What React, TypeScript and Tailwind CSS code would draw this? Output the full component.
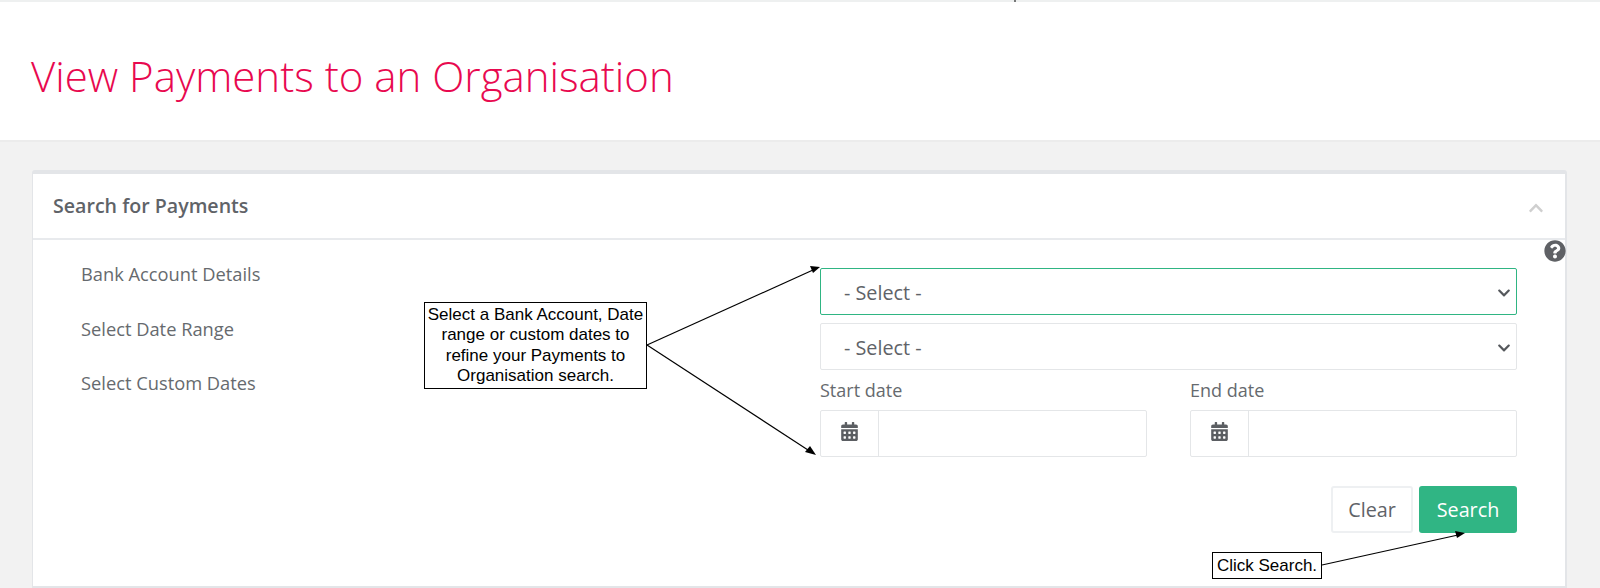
import { FaCalendarAlt, FaChevronDown, FaChevronUp, FaQuestionCircle } from 'react-icons/fa'

const openSans = "font-['Open_Sans',sans-serif]"

function SelectBox({ focused }: { focused?: boolean }) {
  return (
    <div
      className={`flex h-[47px] items-center justify-between rounded-[2px] pl-[23px] pr-[5px] pt-[2px] text-[19.8px] text-[#5f6368] border ${
        focused ? 'border-[#2fb583]' : 'border-[#e4e6e8]'
      }`}
    >
      <span>- Select -</span>
      <FaChevronDown className="h-[14px] w-[14px] text-[#55585c]" />
    </div>
  )
}

function DateField({ label }: { label: string }) {
  return (
    <div className="w-[327px]">
      <label className="block h-[40px] pt-[8px] text-[18px] leading-[24px] text-[#666a6e]">{label}</label>
      <div className="flex h-[47px] rounded-[2px] border border-[#e4e6e8]">
        <div className="flex w-[58px] items-center justify-center border-r border-[#e4e6e8]">
          <FaCalendarAlt className="-mt-[5px] h-[19px] w-[17px] text-[#5b5e62]" />
        </div>
        <div className="flex-1" />
      </div>
    </div>
  )
}

export default function App() {
  return (
    <div className={`relative h-[588px] w-[1600px] overflow-hidden bg-[#f2f2f2] ${openSans}`}>
      {/* Page title */}
      <div className="h-[142px] border-t-[2px] border-b-[2px] border-t-[#eef0f0] border-b-[#ececec] bg-white pl-[31px] pt-[44px]">
        <h1 className="text-[42px] font-light leading-[60px] text-[#e8094f]">View Payments to an Organisation</h1>
      </div>

      <div className="pl-[32px] pr-[33px] pt-[28px]">
        <div className="relative h-[418px] rounded-t-[3px] border-r-2 border-l border-b-2 border-t-[4px] border-[#e3e5e8] bg-white">
          <div className="flex h-[66px] items-center justify-between border-b-2 border-[#e8eaed] pl-[20px] pr-[20px]">
            <h2 className="text-[19.6px] font-semibold text-[#5f6368]">Search for Payments</h2>
            <FaChevronUp className="mt-[3px] h-[16px] w-[18px] text-[#cfcfcf]" />
          </div>

          <FaQuestionCircle className="absolute right-[-1px] top-[66px] h-[22px] w-[22px] text-[#5f6165]" />

          <div className="flex">
            <div className="flex w-[787px] flex-col gap-[30.5px] pl-[48px] pt-[22px] text-[18.3px] leading-[24px] text-[#666a6e]">
              <span>Bank Account Details</span>
              <span>Select Date Range</span>
              <span>Select Custom Dates</span>
            </div>

            <div className="flex w-[697px] flex-col pt-[28px]">
              <SelectBox focused />
              <div className="mt-[8px]">
                <SelectBox />
              </div>
              <div className="flex justify-between">
                <DateField label="Start date" />
                <DateField label="End date" />
              </div>
              <div className="mt-[29px] flex justify-end gap-[6px]">
                <button className="h-[47px] w-[82px] rounded-[3px] border-2 border-[#eef0f2] bg-white text-[19.8px] text-[#5f6368]">
                  Clear
                </button>
                <button className="h-[47px] w-[98px] rounded-[3px] bg-[#30b584] text-[19.8px] text-white">
                  Search
                </button>
              </div>
            </div>
          </div>
        </div>
      </div>

      {/* Annotations laid over the screenshot */}
      <svg className="pointer-events-none absolute inset-0" width="1600" height="588" viewBox="0 0 1600 588">
        <line x1="1015" y1="0" x2="1015" y2="2" stroke="#000" />
        <g stroke="#000" strokeWidth="1.2">
          <line x1="647" y1="345" x2="813" y2="270" />
          <line x1="647" y1="345" x2="808" y2="450" />
          <line x1="1322" y1="565" x2="1458" y2="535" />
        </g>
        <polygon points="820,267 810,266 813,273" fill="#000" />
        <polygon points="816,455 805,452 810,446" fill="#000" />
        <polygon points="1465,533 1455,531 1457,538" fill="#000" />
      </svg>

      <div className="absolute left-[424px] top-[302px] flex h-[87px] w-[223px] items-center justify-center border border-black bg-white text-center font-['Liberation_Sans',sans-serif] text-[17px] leading-[20.4px] text-black">
        <p>
          Select a Bank Account, Date
          <br />
          range or custom dates to
          <br />
          refine your Payments to
          <br />
          Organisation search.
        </p>
      </div>
      <div className="absolute left-[1212px] top-[552px] flex h-[27px] w-[110px] items-center justify-center border border-black bg-white font-['Liberation_Sans',sans-serif] text-[17px] text-black">
        Click Search.
      </div>
    </div>
  )
}
